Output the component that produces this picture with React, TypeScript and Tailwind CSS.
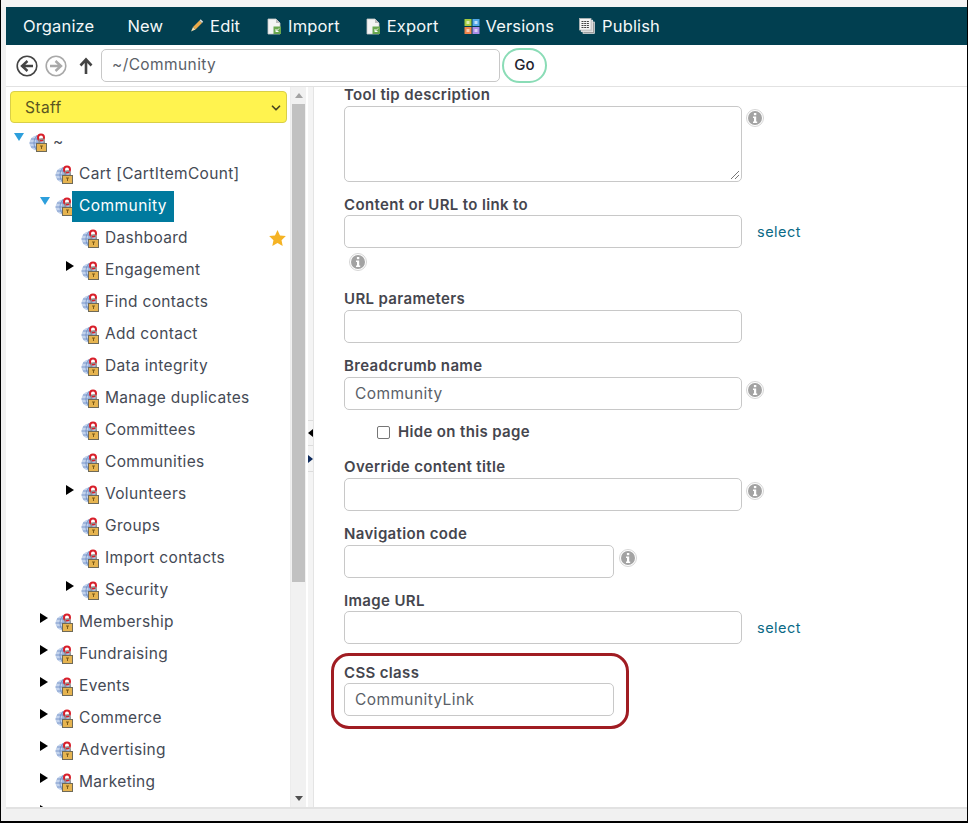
import { ChevronDown } from 'lucide-react';

const FONT = "font-['Inter','Noto_Sans',sans-serif]";

function SecureGlobe() {
  return (
    <svg width="18" height="19" viewBox="0 0 18 19" className="shrink-0">
      <circle cx="8" cy="10" r="7.5" fill="#c3d3ec" />
      <path d="M0.5 10h15M8 2.500v15M2 6h12M2 14h12M8 2.500c-4 4-4 11 0 15M8 2.500c4 4 4 11 0 15" fill="none" stroke="#6a8cc4" strokeWidth="0.8" />
      <circle cx="12" cy="4.500" r="3" fill="#fff" stroke="#d81f2a" strokeWidth="2" />
      <path d="M10 11V8.500a2.600 2.600 0 0 1 5.200 0V11" fill="none" stroke="#8a8a8a" strokeWidth="1.400" />
      <rect x="7.500" y="10.500" width="10" height="8" fill="#e6b450" stroke="#6f6a58" />
      <path d="M11 13h3M12.500 13v3" stroke="#7a5a18" strokeWidth="1" />
    </svg>
  );
}

function InfoIcon() {
  return (
    <svg width="18" height="18" viewBox="0 0 18 18" className="shrink-0">
      <circle cx="9" cy="9" r="8.500" fill="#fff" stroke="#d6d6d6" />
      <circle cx="9" cy="9" r="7" fill="#a3a3a3" />
      <rect x="7.900" y="4" width="2.400" height="2.200" fill="#fff" />
      <path d="M7 7.500h3.200v5h1V14H7v-1.500h1v-3.500H7z" fill="#fff" />
    </svg>
  );
}

function PencilIcon() {
  return (
    <svg width="16" height="16" viewBox="0 0 16 16" className="shrink-0">
      <path d="M4 9l6.500-6.500 2.500 2.500-6.500 6.500z" fill="#e8a94a" />
      <path d="M10.500 2.500l1.200-1.200 2.500 2.500-1.200 1.200z" fill="#d8d8d8" />
      <path d="M4 9l2.500 2.500-4.500 2z" fill="#f2dfb0" />
    </svg>
  );
}

function DocIcon({ accent }: { accent: string }) {
  return (
    <svg width="15" height="17" viewBox="0 0 15 17" className="shrink-0">
      <path d="M1 1h8l4 4v11H1z" fill="#f4f4f4" stroke="#c9c9c9" strokeWidth="0.8" />
      <path d="M9 1v4h4z" fill="#bdbdbd" />
      <rect x="6.500" y="8.500" width="7.500" height="7.500" fill={accent} />
      <path d="M12 10.500l-3 3M9 11v2.500h2.500" stroke="#fff" strokeWidth="1" fill="none" />
    </svg>
  );
}

function VersionsIcon() {
  return (
    <svg width="16" height="17" viewBox="0 0 16 17" className="shrink-0">
      <rect x="0.500" y="1" width="7" height="7" fill="#a4cb3f" />
      <rect x="8.500" y="1" width="7" height="7" fill="#52a9ea" />
      <rect x="0.500" y="9" width="7" height="7" fill="#f0844c" />
      <rect x="8.500" y="9" width="7" height="7" fill="#a98ce8" />
      <rect x="2.500" y="3" width="3" height="3" fill="#dcebb0" />
      <rect x="10.500" y="3" width="3" height="3" fill="#bfe0f8" />
      <rect x="2.500" y="11" width="3" height="3" fill="#f9cdb4" />
      <rect x="10.500" y="11" width="3" height="3" fill="#dccff6" />
    </svg>
  );
}

function PublishIcon() {
  return (
    <svg width="16" height="16" viewBox="0 0 16 16" className="shrink-0">
      <rect x="4" y="4" width="11.500" height="11.500" fill="#9a9a9a" stroke="#e8e8e8" strokeWidth="0.7" />
      <rect x="2.200" y="2.200" width="11.500" height="11.500" fill="#cfcfcf" stroke="#f0f0f0" strokeWidth="0.7" />
      <rect x="0.500" y="0.500" width="11.500" height="11.500" fill="#f4f4f4" stroke="#bbb" strokeWidth="0.7" />
      <path d="M2.500 3.500h7.500M2.500 5.500h7.500M2.500 7.500h7.500M2.500 9.500h7.500" stroke="#444" strokeWidth="1" strokeDasharray="2 0.7" />
    </svg>
  );
}

function ToolbarItem({ label, icon, className }: { label: string; icon?: React.ReactNode; className: string }) {
  return (
    <div className={`flex items-center ${className}`}>
      {icon}
      <span className="whitespace-nowrap text-[16.5px] tracking-[0.15px] text-[#f4f8f9]">{label}</span>
    </div>
  );
}

function CircleArrow({ dim }: { dim?: boolean }) {
  const c = dim ? '#a9a9a9' : '#444';
  return (
    <svg width="22" height="22" viewBox="0 0 22 22" className={`shrink-0 ${dim ? 'rotate-180' : ''}`}>
      <circle cx="11" cy="11" r="9.800" fill="#fff" stroke={c} strokeWidth="1.600" />
      <path d="M17 11H7M11.500 6L6 11l5.500 5" fill="none" stroke={c} strokeWidth="2.400" />
    </svg>
  );
}

type TreeItem = { label: string; level: 0 | 1 | 2; arrow?: 'open' | 'closed'; selected?: boolean; starred?: boolean };

const TREE: TreeItem[] = [
  { label: '~', level: 0, arrow: 'open' },
  { label: 'Cart [CartItemCount]', level: 1 },
  { label: 'Community', level: 1, arrow: 'open', selected: true },
  { label: 'Dashboard', level: 2, starred: true },
  { label: 'Engagement', level: 2, arrow: 'closed' },
  { label: 'Find contacts', level: 2 },
  { label: 'Add contact', level: 2 },
  { label: 'Data integrity', level: 2 },
  { label: 'Manage duplicates', level: 2 },
  { label: 'Committees', level: 2 },
  { label: 'Communities', level: 2 },
  { label: 'Volunteers', level: 2, arrow: 'closed' },
  { label: 'Groups', level: 2 },
  { label: 'Import contacts', level: 2 },
  { label: 'Security', level: 2, arrow: 'closed' },
  { label: 'Membership', level: 1, arrow: 'closed' },
  { label: 'Fundraising', level: 1, arrow: 'closed' },
  { label: 'Events', level: 1, arrow: 'closed' },
  { label: 'Commerce', level: 1, arrow: 'closed' },
  { label: 'Advertising', level: 1, arrow: 'closed' },
  { label: 'Marketing', level: 1, arrow: 'closed' },
];

const INDENT = { 0: 'pl-[8px]', 1: 'pl-[34px]', 2: 'pl-[60px]' };

function TreeRow({ item }: { item: TreeItem }) {
  return (
    <div className={`relative flex h-[32px] shrink-0 items-center ${INDENT[item.level]}`}>
      <div className="h-full w-[15px] shrink-0 pt-[7px]">
        {item.arrow === 'open' && (
          <div className="h-0 w-0 border-x-[5px] border-t-[8px] border-x-transparent border-t-[#2d9fdc]" />
        )}
        {item.arrow === 'closed' && (
          <div className="h-0 w-0 border-y-[5px] border-l-[8px] border-y-transparent border-l-black" />
        )}
      </div>
      <SecureGlobe />
      {item.selected ? (
        <span className="-ml-[1px] flex h-[31px] items-center bg-[#007a9e] pl-[7px] pr-[7px] text-[15.5px] tracking-[0.45px] text-white">
          {item.label}
        </span>
      ) : (
        <span className="ml-[6px] whitespace-nowrap text-[15.5px] tracking-[0.33px] text-[#454a55]">{item.label}</span>
      )}
      {item.starred && (
        <svg width="17" height="16" viewBox="0 0 24 23" className="absolute right-[4px] top-[8px]">
          <path d="M12 0l3.600 7.800 8.400 1-6.200 5.800 1.700 8.400L12 18.800 4.500 23l1.700-8.400L0 8.800l8.400-1z" fill="#f5b324" />
        </svg>
      )}
    </div>
  );
}

function Label({ children }: { children: React.ReactNode }) {
  return <div className="h-[16px] whitespace-nowrap text-[15px] font-semibold leading-[16px] tracking-[0.35px] text-[#45464e]">{children}</div>;
}

function TextBox({ value, short }: { value?: string; short?: boolean }) {
  return (
    <div
      className={`flex h-[33px] shrink-0 items-center rounded-[5px] border border-[#c8c8c8] bg-white px-[10px] pt-[1px] text-[15.5px] tracking-[0.4px] text-[#5b5f68] ${
        short ? 'w-[270px]' : 'w-[398px]'
      }`}
    >
      {value}
    </div>
  );
}

function SelectLink() {
  return <span className="ml-[15px] text-[14.5px] tracking-[0.5px] text-[#0b6a86]">select</span>;
}

export default function App() {
  return (
    <div className={`flex h-[823px] w-[968px] flex-col overflow-hidden border-x border-b-2 border-black bg-[#f1f1f1] ${FONT}`}>
      <div className="h-[7px] shrink-0 bg-[#f4f4f4]" />
      <div className="flex min-h-0 flex-1 flex-col pl-[5px]">
        <div className="flex h-[38px] shrink-0 items-center bg-[#013f50] pl-[17px]">
          <ToolbarItem label="Organize" className="" />
          <ToolbarItem label="New" className="ml-[33px]" />
          <ToolbarItem label="Edit" icon={<PencilIcon />} className="ml-[26px] gap-[5px]" />
          <ToolbarItem label="Import" icon={<DocIcon accent="#6aa84f" />} className="ml-[27px] gap-[6px]" />
          <ToolbarItem label="Export" icon={<DocIcon accent="#6aa84f" />} className="ml-[26px] gap-[6px]" />
          <ToolbarItem label="Versions" icon={<VersionsIcon />} className="ml-[26px] gap-[5px]" />
          <ToolbarItem label="Publish" icon={<PublishIcon />} className="ml-[25px] gap-[7px]" />
        </div>

        <div className="flex h-[42px] shrink-0 items-center border-b border-[#e2e2e2] bg-white pl-[10px]">
          <CircleArrow />
          <div className="ml-[7px]">
            <CircleArrow dim />
          </div>
          <svg width="14" height="18" viewBox="0 0 14 18" className="ml-[12px] shrink-0">
            <path d="M7 17V3M1.500 8.500L7 2.500l5.500 6" fill="none" stroke="#444" strokeWidth="2.600" />
          </svg>
          <div className="ml-[8px] flex h-[33px] w-[399px] items-center rounded-[5px] border border-[#c8c8c8] pb-[1px] pl-[10px] text-[15.5px] tracking-[0.4px] text-[#5b5f68]">
            ~/Community
          </div>
          <div className="ml-[2px] flex h-[35px] w-[45px] items-center justify-center rounded-[18px] border-2 border-[#8adcb6] text-[15px] font-medium text-[#1f2430]">
            Go
          </div>
        </div>

        <div className="flex min-h-0 flex-1 bg-white">
          <div className="relative flex w-[285px] shrink-0 flex-col overflow-hidden border-r border-[#ececec] pl-[4px] pt-[4px]">
            <div className="flex h-[32px] w-[277px] shrink-0 items-center justify-between rounded-[4px] border border-[#d9cf48] bg-[#fff34f] pl-[14px] pr-[3px] pt-[1px] text-[15.5px] tracking-[0.4px] text-[#5a5622]">
              Staff
              <ChevronDown size={14} strokeWidth={3} className="text-[#4a4620]" />
            </div>
            <div className="-ml-[4px] mt-[3px] flex min-h-0 flex-1 flex-col overflow-hidden">
              {TREE.map((item, i) => (
                <TreeRow key={i} item={item} />
              ))}
              <div className="pl-[34px] pt-[7px]">
                <div className="h-0 w-0 border-y-[5px] border-l-[8px] border-y-transparent border-l-black" />
              </div>
            </div>
          </div>

          <div className="flex w-[15px] shrink-0 flex-col items-center bg-[#f1f1f1]">
            <div className="mt-[6px] h-0 w-0 border-x-[4px] border-b-[5px] border-x-transparent border-b-[#a3a3a3]" />
            <div className="mt-[6px] h-[478px] w-[13px] bg-[#c1c1c1]" />
            <div className="mb-[6px] mt-auto h-0 w-0 border-x-[4px] border-t-[5px] border-x-transparent border-t-[#505050]" />
          </div>

          <div className="ml-[2px] flex w-[6px] shrink-0 flex-col items-end border-r border-[#e4e4e4] bg-[#f4f4f4] pt-[333px]">
            <div className="flex h-[26px] w-full items-center justify-end border-y border-[#dcdcdc]">
              <div className="h-0 w-0 border-y-[4px] border-r-[5px] border-y-transparent border-r-black" />
            </div>
            <div className="flex h-[26px] w-full items-center border-b border-[#dcdcdc]">
              <div className="h-0 w-0 border-y-[4px] border-l-[5px] border-y-transparent border-l-[#0d2a5c]" />
            </div>
          </div>

          <div className="min-w-0 flex-1 bg-white pl-[30px]">
            <Label>Tool tip description</Label>
            <div className="mt-[3px] flex items-start gap-[4px]">
              <div className="relative h-[76px] w-[398px] rounded-[5px] border border-[#c8c8c8]">
                <svg width="10" height="10" viewBox="0 0 10 10" className="absolute bottom-[1px] right-[1px]">
                  <path d="M1 9l8-8M5 9l4-4" stroke="#777" strokeWidth="1" />
                </svg>
              </div>
              <div className="mt-[3px]"><InfoIcon /></div>
            </div>

            <div className="mt-[15px]"><Label>Content or URL to link to</Label></div>
            <div className="mt-[2px] flex items-center">
              <TextBox />
              <SelectLink />
            </div>
            <div className="ml-[5px] mt-[5px]"><InfoIcon /></div>

            <div className="mt-[20px]"><Label>URL parameters</Label></div>
            <div className="mt-[3px]"><TextBox /></div>

            <div className="mt-[15px]"><Label>Breadcrumb name</Label></div>
            <div className="mt-[3px] flex items-start gap-[4px]">
              <TextBox value="Community" />
              <div className="mt-[4px]"><InfoIcon /></div>
            </div>

            <label className="ml-[33px] mt-[13px] flex h-[18px] items-center gap-[8px] text-[15px] font-semibold tracking-[0.35px] text-[#45464e]">
              <span className="h-[13px] w-[13px] rounded-[2px] border border-[#767676] bg-white" />
              Hide on this page
            </label>

            <div className="mt-[18px]"><Label>Override content title</Label></div>
            <div className="mt-[3px] flex items-start gap-[4px]">
              <TextBox />
              <div className="mt-[4px]"><InfoIcon /></div>
            </div>

            <div className="mt-[15px]"><Label>Navigation code</Label></div>
            <div className="mt-[3px] flex items-start gap-[5px]">
              <TextBox short />
              <div className="mt-[4px]"><InfoIcon /></div>
            </div>

            <div className="mt-[15px]"><Label>Image URL</Label></div>
            <div className="mt-[2px] flex items-center">
              <TextBox />
              <SelectLink />
            </div>

            <div className="-ml-[13px] mt-[9px] h-[76px] w-[298px] rounded-[18px] border-[3px] border-[#a01c22] pl-[10px] pt-[9px]">
              <Label>CSS class</Label>
              <div className="mt-[2px]"><TextBox value="CommunityLink" short /></div>
            </div>
          </div>
        </div>

        <div className="h-[14px] shrink-0 border-t-2 border-[#e2e2e2] bg-[#f1f1f1]" />
      </div>
    </div>
  );
}
